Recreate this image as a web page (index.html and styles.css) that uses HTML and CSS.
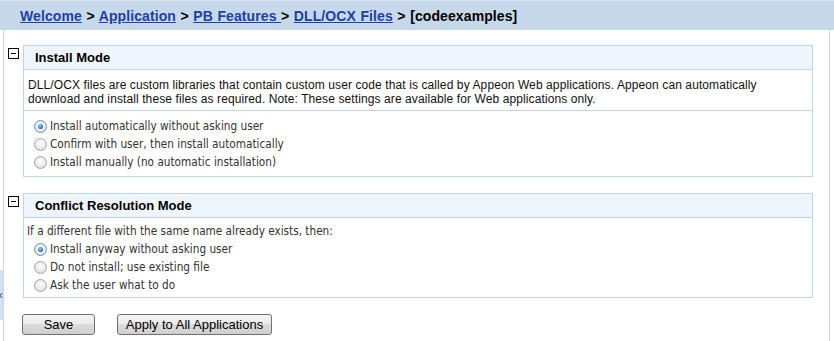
FILE: index.html
```html
<!DOCTYPE html>
<html>
<head>
<meta charset="utf-8">
<link rel="stylesheet" href="styles.css">
</head>
<body>
<div class="header">
  <a href="#">Welcome</a> &gt; <a href="#">Application</a> &gt; <a href="#">PB Features </a>&gt; <a href="#">DLL/OCX Files</a> &gt; [codeexamples]
</div>
<div class="main">
  <div class="splitter">&lsaquo;</div>
  <div class="section">
    <span class="toggle"></span>
    <div class="panel">
      <div class="panel-head">Install Mode</div>
      <div class="desc">DLL/OCX files are custom libraries that contain custom user code that is called by Appeon Web applications. Appeon can automatically download and install these files as required. Note: These settings are available for Web applications only.</div>
      <div class="options opts1">
        <label class="opt"><span class="radio checked"></span>Install automatically without asking user</label>
        <label class="opt"><span class="radio"></span>Confirm with user, then install automatically</label>
        <label class="opt"><span class="radio"></span>Install manually (no automatic installation)</label>
      </div>
    </div>
  </div>
  <div class="section">
    <span class="toggle"></span>
    <div class="panel">
      <div class="panel-head">Conflict Resolution Mode</div>
      <div class="options opts2">
        <div class="intro">If a different file with the same name already exists, then:</div>
        <label class="opt"><span class="radio checked"></span>Install anyway without asking user</label>
        <label class="opt"><span class="radio"></span>Do not install; use existing file</label>
        <label class="opt"><span class="radio"></span>Ask the user what to do</label>
      </div>
    </div>
  </div>
  <div class="buttons">
    <button class="btn btn-save">Save</button>
    <button class="btn btn-apply">Apply to All Applications</button>
  </div>
</div>
</body>
</html>
```
FILE: styles.css
```css
html, body {
  margin: 0;
  padding: 0;
  background: #fff;
  height: 341px;
  overflow: hidden;
}
body {
  font-family: "Liberation Sans", Arial, sans-serif;
  color: #000;
}
.header {
  height: 30px;
  box-sizing: border-box;
  background: #c6d8e9;
  border-top: 1px solid #d6e3ef;
  padding: 6px 0 0 20px;
  font-size: 14px;
  font-weight: bold;
  line-height: 18px;
  letter-spacing: 0.1px;
  word-spacing: 0.5px;
  color: #000;
}
.header a {
  color: #2140a4;
  text-decoration: underline;
}
.main {
  position: relative;
  margin-left: 3px;
  width: 827px;
  height: 311px;
  box-sizing: border-box;
  border-left: 1px solid #c8d9ea;
  border-right: 1px solid #c8d9ea;
  padding: 15px 0 0 4px;
}
.splitter {
  position: absolute;
  left: -4px;
  top: 240px;
  width: 3px;
  height: 50px;
  background: #d4e2f0;
  color: #4a5a6a;
  font-size: 12px;
  line-height: 50px;
  overflow: hidden;
  text-indent: -1px;
}
.section {
  display: flex;
  align-items: flex-start;
  margin-bottom: 16px;
}
.toggle {
  position: relative;
  flex: none;
  width: 9px;
  height: 9px;
  border: 1px solid #000;
  margin-top: 3px;
  margin-right: 4px;
}
.toggle::after {
  content: "";
  position: absolute;
  left: 2px;
  top: 4px;
  width: 5px;
  height: 1px;
  background: #000;
}
.panel {
  width: 790px;
  border: 1px solid #c1d5e9;
  box-sizing: border-box;
}
.panel-head {
  height: 23px;
  background: #eff5fd;
  border-bottom: 1px solid #c1d5e9;
  font-size: 13px;
  font-weight: bold;
  line-height: 24px;
  padding-left: 11px;
}
.desc {
  font-size: 12px;
  line-height: 14px;
  letter-spacing: 0.1px;
  padding: 8px 4px 4px 4px;
  border-bottom: 1px solid #c1d5e9;
  color: #111;
}
.options {
  font-family: "DejaVu Sans Condensed", "DejaVu Sans", sans-serif;
  font-size: 11.7px;
  color: #333;
}
.opts1 {
  padding: 6px 0 5px 10px;
}
.opts2 {
  padding: 4px 0 3px 3px;
}
.opts2 .opt {
  padding-left: 7px;
}
.intro {
  line-height: 18px;
}
.opt {
  display: flex;
  align-items: center;
  height: 18px;
}
.radio {
  flex: none;
  width: 11px;
  height: 11px;
  border-radius: 50%;
  border: 1px solid #a4a4a4;
  background: radial-gradient(circle at 50% 40%, #ffffff 0%, #e8e8e8 60%, #cfcfcf 100%);
  margin-right: 3px;
  box-sizing: content-box;
  position: relative;
}
.radio.checked {
  border-color: #6f8fb1;
}
.radio.checked::after {
  content: "";
  position: absolute;
  left: 3px;
  top: 3px;
  width: 5px;
  height: 5px;
  border-radius: 50%;
  background: radial-gradient(circle at 40% 35%, #9fd2ff 0%, #2a78c6 60%, #0d4d96 100%);
}
.buttons {
  display: flex;
  gap: 22px;
  padding-left: 14px;
  margin-top: 3px;
}
.btn {
  height: 21px;
  box-sizing: border-box;
  border: 1px solid #707070;
  border-radius: 3px;
  background: linear-gradient(#f4f4f4 0%, #ebebeb 45%, #dcdcdc 50%, #cfcfcf 100%);
  font-family: "Liberation Sans", Arial, sans-serif;
  font-size: 13px;
  color: #000;
  padding: 0;
  line-height: 19px;
}
.btn-save {
  width: 73px;
}
.btn-apply {
  width: 155px;
}
```
